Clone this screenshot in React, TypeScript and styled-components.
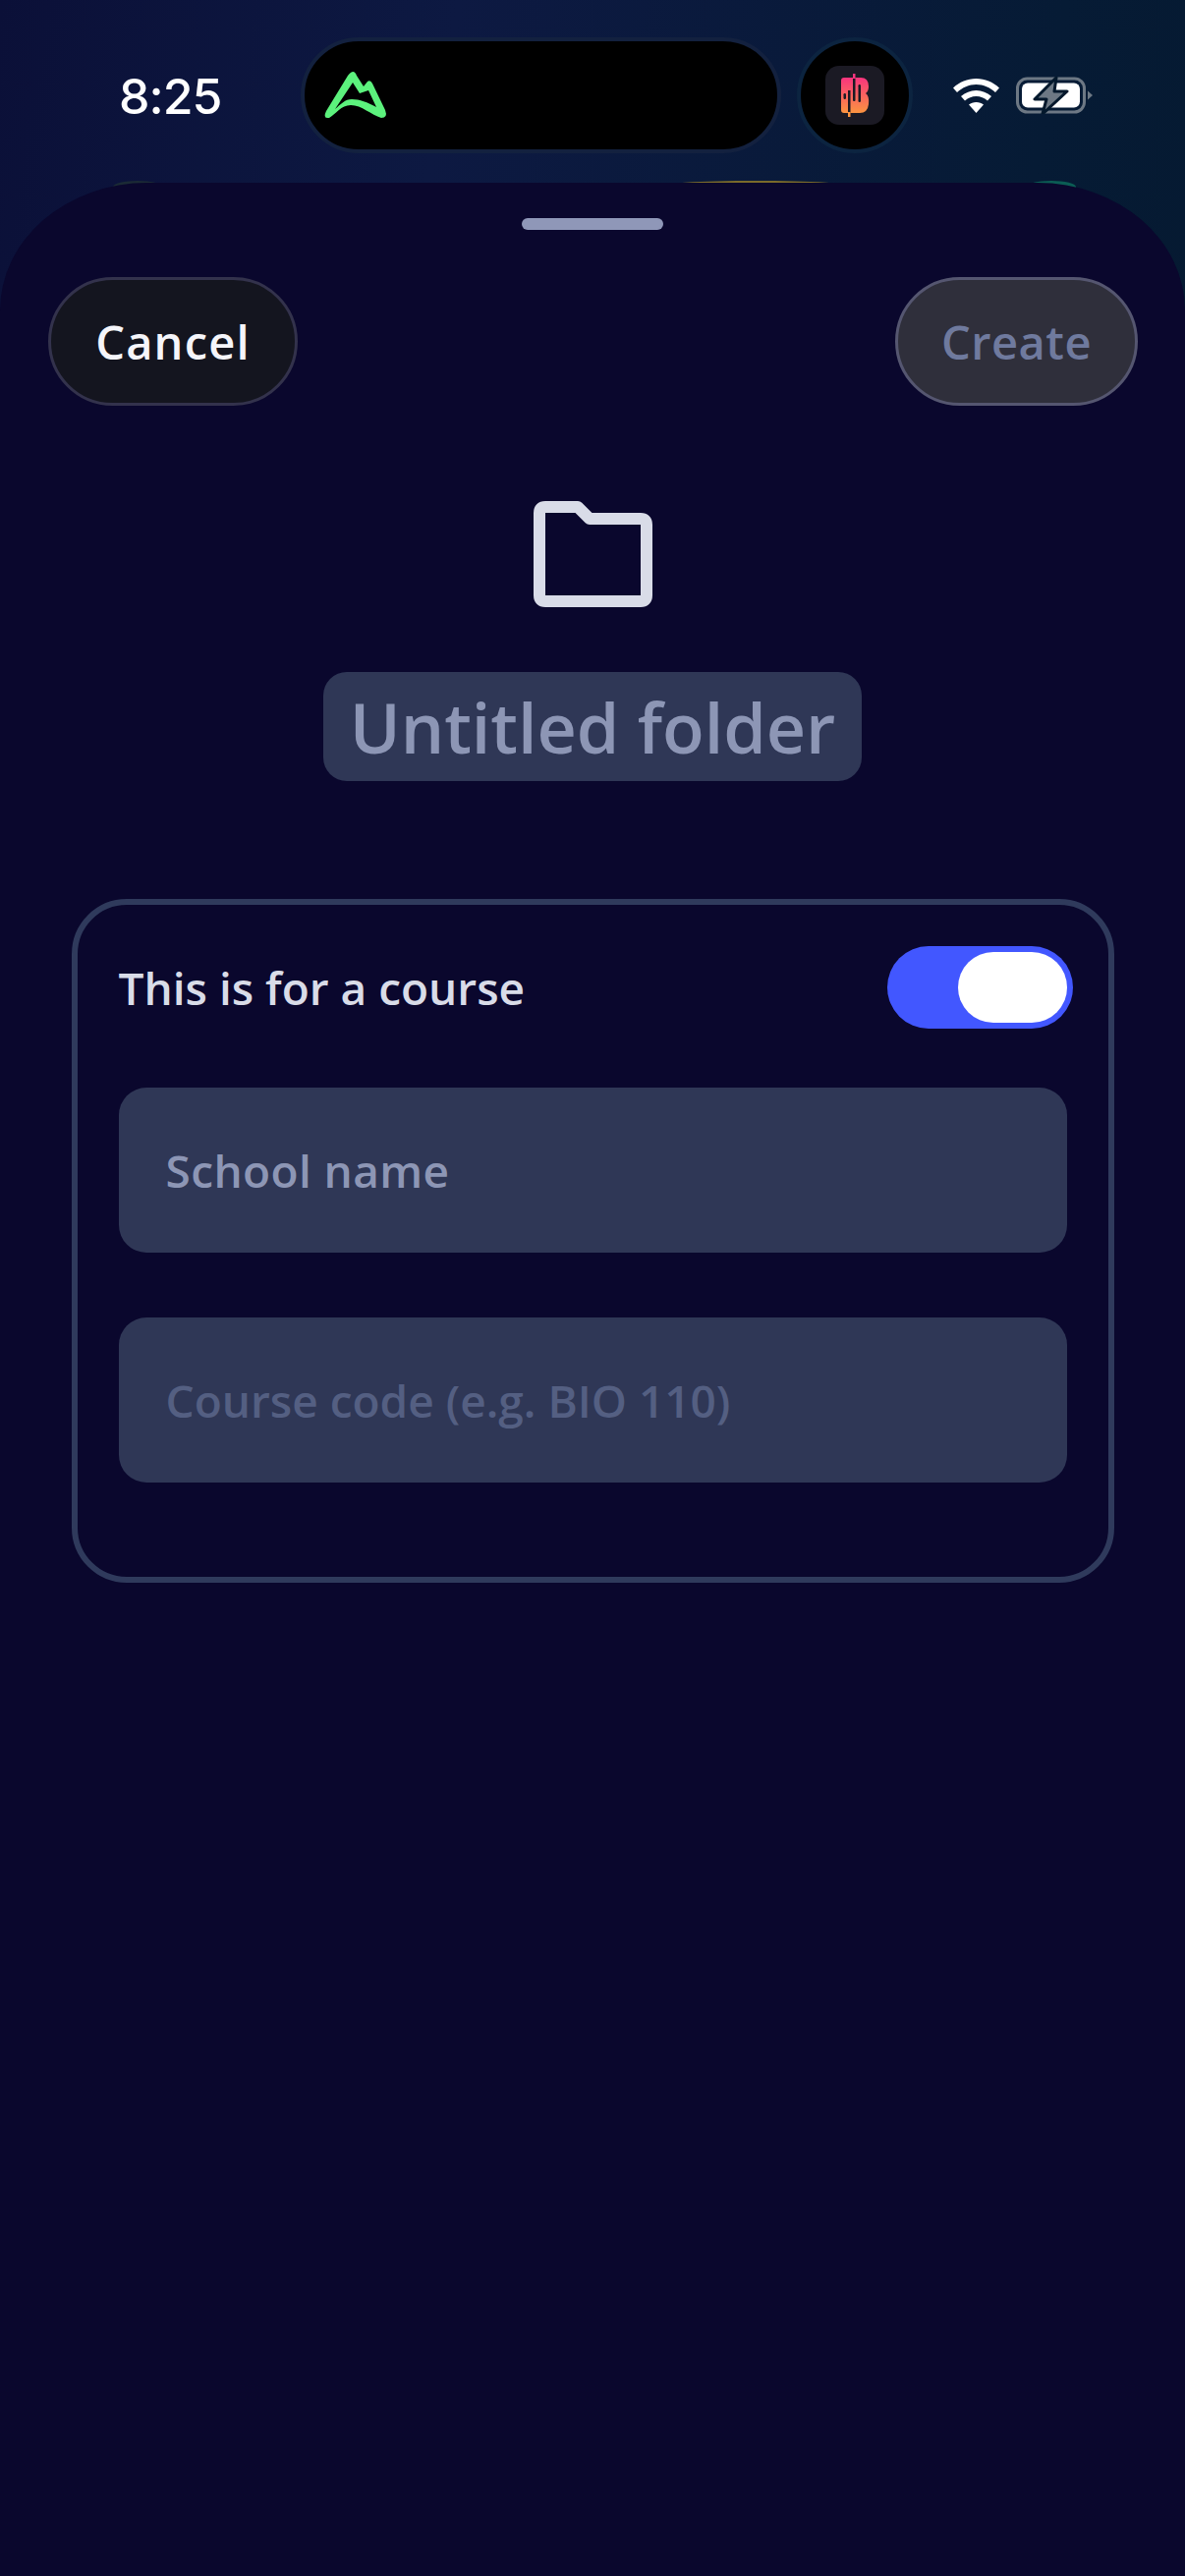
import React from 'react';
import styled, { createGlobalStyle } from 'styled-components';

const GlobalStyle = createGlobalStyle`
  html, body {
    margin: 0;
    padding: 0;
    background: #0a072d;
  }
  * {
    box-sizing: border-box;
  }
`;

const Page = styled.div`
  width: 1206px;
  height: 2622px;
  overflow: hidden;
  display: flex;
  flex-direction: column;
  font-family: 'Open Sans', Lato, sans-serif;
  font-weight: 600;
  font-variant-ligatures: none;
  background: linear-gradient(100deg, #0b1038 0%, #0d1942 28%, #061b35 65%, #04172a 100%);
`;

const StatusBar = styled.div`
  height: 186px;
  flex: none;
  display: flex;
  align-items: flex-start;
  padding-top: 38px;
`;

const Time = styled.div`
  width: 306px;
  padding: 35px 0 0 121px;
  font-family: Inter, sans-serif;
  font-weight: 500;
  font-size: 50px;
  line-height: 50px;
  letter-spacing: -1px;
  color: #ffffff;
`;

const Island = styled.div`
  width: 489px;
  height: 118px;
  flex: none;
  display: flex;
  align-items: center;
  padding-left: 10px;
  background: #000;
  border: 4px solid #13213f;
  border-radius: 59px;
`;

const IslandDot = styled.div`
  width: 118px;
  height: 118px;
  flex: none;
  margin-left: 16px;
  display: flex;
  align-items: center;
  justify-content: center;
  background: #000;
  border: 4px solid #0c2440;
  border-radius: 50%;
`;

const AppTile = styled.div`
  width: 60px;
  height: 60px;
  background: #1b1a24;
  border-radius: 14px;
`;

const StatusIcons = styled.div`
  display: flex;
  align-items: center;
  gap: 17px;
  margin-left: 41px;
  height: 118px;
`;

const SheetArea = styled.div`
  position: relative;
  flex: 1;
  display: flex;
`;

const Peek = styled.div<{ $left: number; $width: number; $color: string }>`
  position: absolute;
  top: -2px;
  left: ${(p) => p.$left}px;
  width: ${(p) => p.$width}px;
  height: 30px;
  border-radius: 50% 50% 0 0 / 6px 6px 0 0;
  background: ${(p) => p.$color};
`;

const Sheet = styled.div`
  position: relative;
  flex: 1;
  display: flex;
  flex-direction: column;
  align-items: center;
  padding-top: 36px;
  background: #0a072d;
  border-radius: 150px 150px 0 0 / 130px 130px 0 0;
`;

const Handle = styled.div`
  width: 144px;
  height: 12px;
  border-radius: 6px;
  background: #8f97b8;
`;

const Toolbar = styled.div`
  width: 100%;
  display: flex;
  justify-content: space-between;
  padding: 48px 48px 0 49px;
`;

const PillButton = styled.button<{ $disabled?: boolean }>`
  height: 131px;
  width: ${(p) => (p.$disabled ? 247 : 254)}px;
  padding: 0;
  border-radius: 66px;
  border: 3px solid ${(p) => (p.$disabled ? '#555670' : '#33324c')};
  background: ${(p) => (p.$disabled ? '#2f2f3b' : '#14151f')};
  color: ${(p) => (p.$disabled ? '#6f7a9e' : '#f5f5fa')};
  font-family: inherit;
  font-weight: 600;
  font-size: 47px;
  letter-spacing: ${(p) => (p.$disabled ? 0.5 : 1.2)}px;
`;

const FolderIcon = styled.svg`
  display: block;
  margin-top: 97px;
`;

const TitleChip = styled.div`
  margin-top: 66px;
  height: 111px;
  width: 548px;
  display: flex;
  align-items: center;
  justify-content: center;
  border-radius: 24px;
  background: #2f3756;
  color: #8d96b5;
  font-size: 70px;
  white-space: nowrap;
`;

const CourseCard = styled.div`
  margin-top: 120px;
  width: 1061px;
  height: 696px;
  padding: 42px 42px 0 42px;
  border: 6px solid #2f3a5c;
  border-radius: 56px;
`;

const ToggleRow = styled.div`
  display: flex;
  align-items: center;
  justify-content: space-between;
  height: 84px;
`;

const ToggleLabel = styled.span`
  color: #d9dce8;
  font-size: 46px;
`;

const Toggle = styled.div`
  width: 189px;
  height: 84px;
  margin-right: -6px;
  padding: 6px;
  display: flex;
  justify-content: flex-end;
  border-radius: 42px;
  background: #4257ff;
`;

const ToggleKnob = styled.div`
  width: 111px;
  height: 72px;
  border-radius: 36px;
  background: #ffffff;
`;

const Field = styled.div<{ $muted?: boolean }>`
  height: 168px;
  margin-top: ${(p) => (p.$muted ? 66 : 60)}px;
  padding-left: 48px;
  display: flex;
  align-items: center;
  border-radius: 28px;
  background: #2f3756;
  color: ${(p) => (p.$muted ? '#545f82' : '#8d96b5')};
  font-size: 46px;
  letter-spacing: ${(p) => (p.$muted ? 0 : 0.4)}px;
`;

const MountainLogo = () => (
  <svg width="84" height="64" viewBox="0 0 84 64">
    <path
      d="M12 48 L34 12 Q40 4 43 12 L50 23 L54 18 Q57 16 59 20 L72 47 Q75 55 68 55 C58 52 48 42 37 42 C27 42 22 51 15 55 Q8 56 12 48 Z M21 46 C27 41 31 36 38 36 C46 36 54 39 63 44 L55 27 L46 30 L39 19 Z"
      fill="#5cf27d"
      fillRule="evenodd"
    />
  </svg>
);

const AppGlyph = () => (
  <svg width="60" height="60" viewBox="6 5 60 60" style={{ display: 'block' }}>
    <defs>
      <linearGradient id="appGrad" x1="0" y1="0" x2="0" y2="1">
        <stop offset="0" stopColor="#f9347e" />
        <stop offset="1" stopColor="#fb9440" />
      </linearGradient>
    </defs>
    <path
      d="M25 17 H42 Q50 17 50 26 Q50 31 47 33 Q51 36 50 44 Q49 53 41 53 H25 Q22 53 22 50 V20 Q22 17 25 17 Z"
      fill="url(#appGrad)"
    />
    <rect x="29" y="30" width="2.5" height="23" fill="#1b1a24" />
    <rect x="29" y="52" width="2.5" height="5" fill="#fb9440" />
    <rect x="34" y="17" width="2.5" height="24" rx="1" fill="#1b1a24" />
    <rect x="34" y="13" width="2.5" height="5" fill="#f9347e" />
    <rect x="24.5" y="33" width="2.5" height="6" rx="1.2" fill="#1b1a24" />
    <rect x="39.5" y="24" width="2.5" height="18" rx="1.2" fill="#1b1a24" />
  </svg>
);

const WifiIcon = () => (
  <svg width="47" height="35" viewBox="0 0 47 35">
    <path
      d="M23.5 0 C32.5 0 40.5 3.5 47 9.5 L43 14 C37.5 9 31 6 23.5 6 C16 6 9.5 9 4 14 L0 9.5 C6.5 3.5 14.5 0 23.5 0 Z"
      fill="#fff"
    />
    <path
      d="M23.5 12 C29.5 12 34.5 14.5 39 18 L35 22.5 C31.5 19.7 28 18 23.5 18 C19 18 15.5 19.7 12 22.5 L8 18 C12.5 14.5 17.5 12 23.5 12 Z"
      fill="#fff"
    />
    <path d="M23.5 24 C26.5 24 29 25 31 26.5 L23.5 35 L16 26.5 C18 25 20.5 24 23.5 24 Z" fill="#fff" />
  </svg>
);

const BatteryIcon = () => (
  <svg width="79" height="38" viewBox="0 0 79 38">
    <rect x="1.5" y="2" width="68" height="34" rx="10" fill="none" stroke="#6d7884" strokeWidth="3" />
    <rect x="6" y="6.5" width="59" height="25" rx="6" fill="#fff" />
    <path d="M73 14.5 L78 19 L73 23.5 Z" fill="#6d7884" />
    <path d="M41 1 L19 23 H31 L27 38 L52 15 H39 Z" fill="#6d7884" stroke="#03182c" strokeWidth="3" strokeLinejoin="round" />
  </svg>
);

export default function App() {
  return (
    <Page>
      <GlobalStyle />
      <StatusBar>
        <Time>8:25</Time>
        <Island>
          <MountainLogo />
        </Island>
        <IslandDot>
          <AppTile>
            <AppGlyph />
          </AppTile>
        </IslandDot>
        <StatusIcons>
          <WifiIcon />
          <BatteryIcon />
        </StatusIcons>
      </StatusBar>
      <SheetArea>
        <Peek $left={115} $width={50} $color="#1b2a35" />
        <Peek $left={668} $width={202} $color="#7a6a2a" />
        <Peek $left={1045} $width={50} $color="#0b5d54" />
        <Sheet>
          <Handle />
          <Toolbar>
            <PillButton>Cancel</PillButton>
            <PillButton $disabled>Create</PillButton>
          </Toolbar>
          <FolderIcon width="121" height="108" viewBox="0 0 121 108">
            <path
              d="M6 12 Q6 6 12 6 H45 L57 18 H109 Q115 18 115 24 V96 Q115 102 109 102 H12 Q6 102 6 96 Z"
              fill="none"
              stroke="#d9dce8"
              strokeWidth="12"
              strokeLinejoin="round"
            />
          </FolderIcon>
          <TitleChip>Untitled folder</TitleChip>
          <CourseCard>
            <ToggleRow>
              <ToggleLabel>This is for a course</ToggleLabel>
              <Toggle>
                <ToggleKnob />
              </Toggle>
            </ToggleRow>
            <Field>School name</Field>
            <Field $muted>Course code (e.g. BIO 110)</Field>
          </CourseCard>
        </Sheet>
      </SheetArea>
    </Page>
  );
}
